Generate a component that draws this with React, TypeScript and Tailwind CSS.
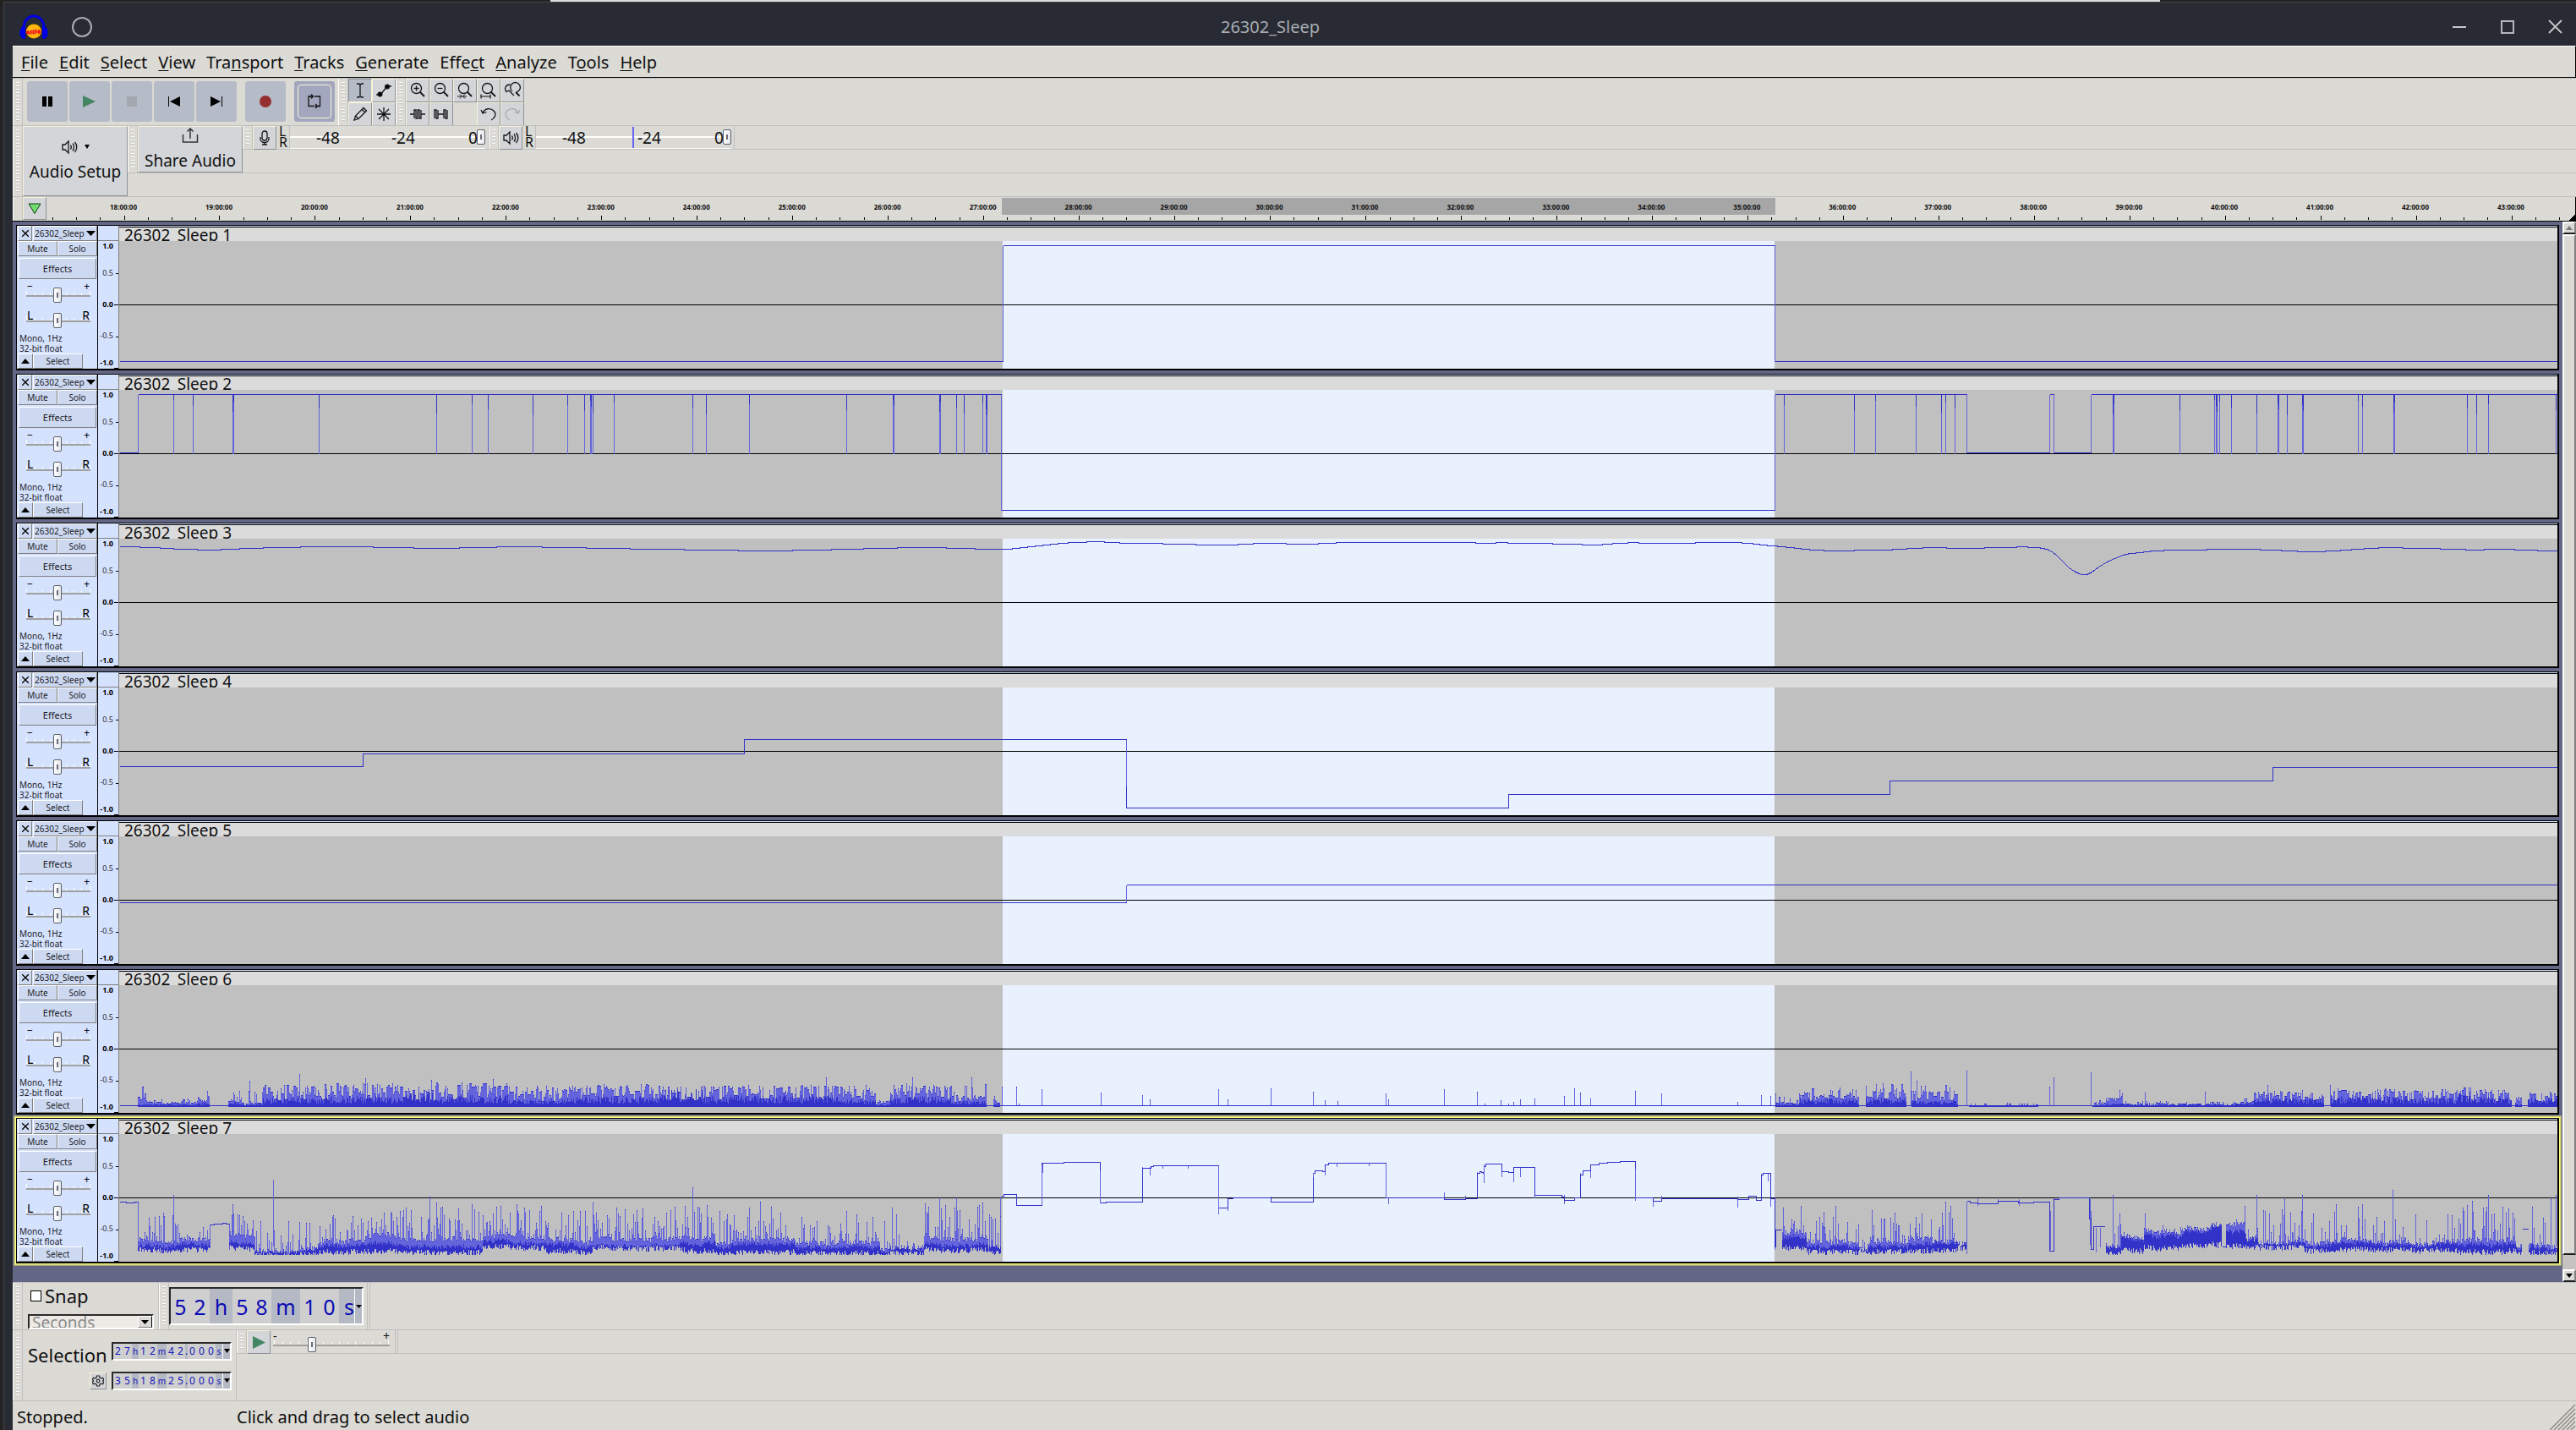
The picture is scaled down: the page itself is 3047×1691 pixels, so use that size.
import React from "react";

const LANE_W = 2884;
const LANE_H = 151;
const DARK = "#3232c8";
const LIGHT = "#6464dc";

/* ---------- waveform data ---------- */

function random(seed: number) {
  let s = seed;
  return () => {
    s = (s * 1664525 + 1013904223) >>> 0;
    return s / 4294967296;
  };
}

type Wave = { dark: string; light: string };

const gates: number[] = [
  64, 87, 134, 135, 236, 375, 417, 436, 489, 530, 550, 557, 558, 560, 585, 678, 694, 745, 860, 915, 916, 970, 971, 990,
  999, 1021, 1025, 1026, 1969, 2052, 2077, 2125, 2155, 2160, 2171, 2358, 2359, 2437, 2478, 2480, 2481, 2484, 2498, 2528,
  2553, 2554, 2564, 2582, 2583, 2648, 2653, 2690, 2691, 2777, 2788, 2802, 2882,
];

const wave1: Wave = { dark: "M0 142H1045M1045 5H1958M1958 142H2884", light: "M1045 142V5M1958 5V142" };

const wave2: Wave = {
  dark:
    "M0 74H22M22 5H1043M1043 142H1958M1958 5H2185M2185 74H2283M2283 5H2288M2288 74H2332M2332 5H2884" +
    gates.map((x, i) => `M${x} 5V${11 + ((i * 7) % 19)}`).join(""),
  light:
    "M22 74V5M1043 5V142M1958 142V5M2185 5V74M2283 74V5M2288 5V74M2332 74V5" + gates.map((x) => `M${x} 5V75`).join(""),
};

function steps(points: [number, number][]) {
  return points.map(([x, y], i) => (i === 0 ? `M${x} ${y}` : `H${x}V${y}`)).join("");
}

const wave3: Wave = {
  dark:
    steps([
      [0, 9], [24, 10], [48, 11], [64, 12], [92, 13], [120, 12], [142, 11], [170, 10], [214, 9], [300, 10], [348, 11],
      [402, 10], [446, 9], [500, 10], [552, 11], [604, 12], [668, 13], [732, 14], [796, 13], [842, 12], [880, 11],
      [920, 10], [978, 11], [1012, 12], [1056, 11], [1065, 10], [1074, 9], [1083, 8], [1092, 7], [1101, 6], [1110, 5],
      [1122, 4], [1144, 3], [1165, 4], [1183, 5], [1234, 6], [1273, 7], [1323, 6], [1341, 5], [1380, 6], [1418, 5],
      [1439, 4], [1604, 5], [1628, 4], [1642, 5], [1695, 6], [1730, 7], [1754, 6], [1766, 5], [1784, 4], [1797, 5],
      [1864, 4], [1919, 5], [1932, 6], [1940, 7], [1949, 8], [1961, 9], [1971, 10], [1981, 11], [1989, 12], [1999, 13],
      [2016, 14], [2052, 13], [2097, 12], [2114, 11], [2133, 10], [2161, 11], [2206, 10], [2244, 9], [2257, 10],
      [2272, 11], [2277, 12], [2281, 13],
    ]) +
    "L2286 15L2292 20L2299 27L2306 34L2312 38L2318 41L2321 42H2327L2333 39L2341 33L2351 27L2360 23L2370 19L2378 17H2385V16H2394V15H2402V14H2418V13H2469V12H2532V13H2557V14H2576V15H2609V14H2627V13H2640V12H2655V11H2672V10H2701V11H2745V12H2775V13H2797V12H2833V13H2860V14H2884",
  light: "",
};

const wave4: Wave = {
  dark: "M0 93H288V78H739V61H1191M1191 116V142H1643V126H2094V110H2547V94H2884",
  light: "M1191 61V142",
};

const wave5: Wave = { dark: "M0 78H1191M1191 57H2884", light: "M1191 78V57" };

/* [start, end, usual peak, highest peak, height of the dense part] */
const motion: [number, number, number, number, number][] = [
  [22, 36, 11, 24, 2], [36, 92, 5, 9, 2], [92, 107, 11, 18, 3], [129, 145, 12, 22, 4], [145, 170, 4, 20, 2],
  [170, 250, 21, 26, 8], [250, 330, 24, 28, 9], [330, 375, 18, 24, 13], [375, 460, 22, 29, 10], [460, 530, 17, 24, 6],
  [530, 640, 21, 26, 9], [640, 690, 19, 24, 16], [690, 850, 22, 26, 10], [850, 895, 20, 25, 7], [895, 912, 5, 8, 2],
  [912, 985, 22, 27, 9], [985, 1026, 12, 26, 5], [1034, 1042, 8, 12, 2],
  [1959, 1987, 4, 12, 2], [1987, 2058, 17, 22, 7], [2066, 2114, 20, 30, 8], [2120, 2175, 17, 26, 5],
  [2188, 2270, 1, 4, 1], [2334, 2350, 4, 7, 1], [2350, 2370, 9, 15, 3], [2370, 2500, 3, 6, 2], [2500, 2525, 6, 9, 3],
  [2525, 2608, 16, 20, 8], [2616, 2766, 17, 21, 9], [2766, 2782, 21, 26, 12], [2782, 2830, 16, 20, 9],
  [2834, 2842, 10, 18, 2], [2849, 2884, 14, 18, 8],
];
const motionSpikes: [number, number][] = [
  [154, 30], [213, 38], [291, 33], [369, 31], [442, 32], [836, 34], [938, 34], [1008, 34], [1044, 23], [1061, 23],
  [1064, 3], [1091, 20], [1161, 16], [1210, 13], [1219, 8], [1300, 20], [1311, 8], [1362, 21], [1412, 17], [1426, 7],
  [1441, 6], [1498, 15], [1501, 8], [1567, 20], [1606, 17], [1615, 3], [1634, 7], [1643, 3], [1649, 5], [1657, 8],
  [1674, 9], [1709, 12], [1721, 21], [1728, 16], [1740, 9], [1793, 18], [1824, 15], [1914, 5], [1942, 13], [1953, 12],
  [1959, 15], [2119, 41], [2126, 30], [2185, 42], [2283, 23], [2288, 34], [2332, 40], [2366, 19], [2396, 16],
  [2467, 17], [2541, 25], [2615, 25],
];

function motionWave(): Wave {
  const r = random(61);
  let dark = "M0 142H2884";
  let light = "";
  for (const [a, b, usual, high, dense] of motion) {
    let hold = usual;
    for (let x = a; x < b; x++) {
      const k = r();
      if (k > 0.85) hold = usual + (high - usual) * r();
      else if (k > 0.3) hold = usual * (0.35 + 0.75 * r());
      const body = Math.min(hold, dense * (0.3 + r()));
      light += `M${x} 142V${Math.round(142 - hold)}`;
      dark += `M${x} 143V${Math.round(142 - body)}M${x} ${Math.round(142 - hold)}v1`;
    }
  }
  for (const [x, h] of motionSpikes) {
    light += `M${x} 142V${142 - h}`;
    dark += `M${x} ${142 - h}v1`;
  }
  return { dark, light };
}

/* [start, end, top of haze, top of dense part, bottom, highest spike, spike chance] */
const light7: [number, number, number, number, number, number, number][] = [
  [22, 107, 122, 131, 137, 92, 0.3], [130, 160, 114, 126, 134, 90, 0.4], [160, 235, 132, 136, 142, 100, 0.3],
  [235, 290, 125, 133, 140, 94, 0.36], [290, 430, 118, 130, 139, 84, 0.42], [430, 505, 117, 127, 134, 82, 0.4],
  [505, 560, 121, 130, 139, 88, 0.4], [560, 665, 118, 129, 134, 86, 0.36], [665, 705, 117, 127, 137, 82, 0.42],
  [705, 800, 123, 131, 141, 84, 0.4], [800, 900, 126, 134, 142, 94, 0.32], [900, 952, 132, 137, 142, 92, 0.26],
  [952, 1028, 118, 128, 136, 82, 0.44], [1028, 1043, 130, 132, 140, 92, 0.25],
  [1967, 1996, 112, 121, 134, 96, 0.3], [1996, 2058, 126, 134, 140, 90, 0.42], [2058, 2068, 133, 134, 137, 120, 0.1],
  [2068, 2116, 125, 133, 140, 90, 0.42], [2116, 2145, 120, 130, 139, 92, 0.44], [2145, 2175, 124, 129, 138, 88, 0.38],
  [2175, 2185, 125, 129, 134, 110, 0.2], [2350, 2368, 128, 132, 140, 104, 0.2],
  [2368, 2395, 117, 122, 137, 112, 0.05], [2395, 2440, 110, 118, 134, 106, 0.05], [2440, 2475, 110, 116, 133, 104, 0.06],
  [2475, 2487, 105, 110, 131, 102, 0.1], [2492, 2515, 104, 116, 133, 98, 0.2], [2515, 2530, 118, 122, 132, 104, 0.2],
  [2530, 2585, 122, 128, 133, 86, 0.4], [2585, 2680, 124, 130, 137, 90, 0.32], [2680, 2765, 126, 131, 138, 93, 0.3],
  [2765, 2835, 123, 131, 140, 82, 0.32], [2835, 2842, 128, 134, 139, 122, 0.1], [2850, 2884, 128, 134, 141, 98, 0.18],
];
const lightSpikes: [number, number][] = [
  [64, 71], [134, 82], [182, 54], [367, 73], [375, 80], [417, 82], [451, 84], [499, 84], [560, 80],
  [657, 85], [678, 62], [684, 85], [758, 79], [860, 90], [914, 86], [953, 81], [970, 74], [990, 74], [1021, 80],
  [1968, 86], [1989, 84], [2030, 84], [2073, 89], [2160, 79], [2166, 84], [2358, 71], [2366, 93], [2396, 93],
  [2514, 84], [2528, 71], [2561, 76], [2582, 71], [2622, 82], [2648, 85], [2653, 82], [2689, 65], [2777, 83],
  [2783, 78], [2802, 71], [2854, 85], [2876, 76], [2882, 71],
];

function lightWave(): Wave {
  const r = random(977);
  let dark =
    "M0 80H8V81H18V80H22M107 107H112V106H122V105H126V106H130" +
    "M1043 73H1046V71H1061V84H1091M1091 36V34H1117V33H1160V43M1160 81H1167V80H1210V40H1220V38H1223V37H1300" +
    "M1300 87H1311V76H1317V75H1362V80H1412V50M1412 46H1414V43H1423V44H1426V36H1430V34H1498M1498 75H1567V77H1592V76H1606V46H1609V44H1611V45H1613V46" +
    "M1614 38H1616V35H1635V44H1643V45H1649V39H1674V72H1706V74H1709V78H1721V75H1728V48H1731V43H1740V36H1750V34H1760V33H1775V32H1793V40" +
    "M1793 75H1814V79H1824V76H1914V77H1927V73H1936V78H1942V48H1944V46H1953V76H1958M1958 74V133H1959V113H1966" +
    "M2185 79H2189V81H2198V82H2222V79H2246V81H2264V80H2283V138H2288V77H2294V75H2330V100H2332V136H2335V109H2348" +
    "M2842 112H2849M2487 133H2491";
  let light =
    "M22 80V132M107 106V134M130 106V136M1042 134V73M1061 71V84M1091 84V34M1092 45V34M1160 34V81M1210 80V38M1219 48V38M1234 37V40M1264 37V40M1300 37V94" +
    "M1311 90V75M1362 73V80M1412 80V45M1426 48V35M1440 34V38M1478 34V37M1498 34V75M1501 75V82M1567 68V77M1592 72V77M1606 76V44M1614 57V35M1635 35V50M1649 56V39M1657 39V50" +
    "M1674 39V75M1709 71V82M1728 75V45M1740 51V35M1793 32V78M1814 74V85M1824 72V79M1914 73V86M1942 78V46M1950 46V55M1953 46V85M1958 76V136" +
    "M2185 141V79M2198 75V84M2222 76V80M2247 76V84M2283 80V138M2284 90V136M2288 138V75M2331 76V130M2332 136V90M2338 110V139M2343 110V133";
  for (const [a, b, haze, dense, bottom, spike, chance] of light7) {
    let drift = 0;
    for (let x = a; x < b; x++) {
      drift = Math.max(-3, Math.min(3, drift + (r() - 0.5) * 2));
      const hit = r() < chance;
      const top = hit ? haze - (haze - spike) * Math.pow(r(), 1.3) : haze + drift + r() * 6;
      const mid = Math.max(top, dense + drift + (r() - 0.5) * 5);
      const low = Math.min(142, bottom + drift * 0.5 + (r() - 0.6) * 7);
      light += `M${x} ${Math.round(low)}V${Math.round(top)}`;
      dark += `M${x} ${Math.round(low)}V${Math.round(Math.min(mid, low - 1))}M${x} ${Math.round(top)}v1`;
    }
  }
  for (const [x, y] of lightSpikes) {
    light += `M${x} 132V${y}`;
    dark += `M${x} ${y}v1`;
  }
  return { dark, light };
}

const tracks: { name: string; wave: Wave; focused?: boolean }[] = [
  { name: "26302_Sleep 1", wave: wave1 },
  { name: "26302_Sleep 2", wave: wave2 },
  { name: "26302_Sleep 3", wave: wave3 },
  { name: "26302_Sleep 4", wave: wave4 },
  { name: "26302_Sleep 5", wave: wave5 },
  { name: "26302_Sleep 6", wave: motionWave() },
  { name: "26302_Sleep 7", wave: lightWave(), focused: true },
];

/* ---------- shared pieces ---------- */

function Grabber() {
  return (
    <div className="flex w-3 shrink-0 flex-col items-center border-l border-r border-l-white border-r-[#bfbfbf] py-1">
      <div className="w-1 flex-1 bg-[repeating-linear-gradient(to_bottom,#ffffff_0px,#ffffff_1px,#c9c8c4_1px,#c9c8c4_2px,transparent_2px,transparent_4px)]" />
    </div>
  );
}

const bevel = "border border-t-[#f7f4d8] border-l-[#f7f4d8] border-b-[#8d9196] border-r-[#8d9196] bg-[#d3d5d8]";

function ToolButton({ label, pressed, children }: { label: string; pressed?: boolean; children: React.ReactNode }) {
  return (
    <button
      aria-label={label}
      className={
        pressed
          ? "flex size-7 items-center justify-center border border-t-[#8d9196] border-l-[#8d9196] border-r-[#f7f4d8] border-b-[#f7f4d8] bg-[#b5bbc7]"
          : "flex size-7 items-center justify-center " + bevel
      }
    >
      {children}
    </button>
  );
}

function Icon({ children, size = 20, stroke = "#141414" }: { children: React.ReactNode; size?: number; stroke?: string }) {
  return (
    <svg width={size} height={size} viewBox={`0 0 ${size} ${size}`} fill="none" stroke={stroke} strokeWidth="1.3">
      {children}
    </svg>
  );
}

function TransportButton({ label, children }: { label: string; children: React.ReactNode }) {
  return (
    <button aria-label={label} className="flex size-12 items-center justify-center rounded-[3px] bg-[#b5bbc7]">
      {children}
    </button>
  );
}

const thumb =
  "appearance-none bg-transparent [&::-webkit-slider-thumb]:h-[18px] [&::-webkit-slider-thumb]:w-[10px] [&::-webkit-slider-thumb]:appearance-none [&::-webkit-slider-thumb]:rounded-[2px] [&::-webkit-slider-thumb]:border [&::-webkit-slider-thumb]:border-[#5c6068] [&::-webkit-slider-thumb]:bg-[linear-gradient(#6b6b78,#6b6b78),linear-gradient(to_right,#ffffff,#e4e7ec)] [&::-webkit-slider-thumb]:bg-[length:2px_6px,100%_100%] [&::-webkit-slider-thumb]:bg-center [&::-webkit-slider-thumb]:bg-no-repeat";

function Slider({
  label,
  value,
  ticks,
  left,
  right,
  kind,
}: {
  label: string;
  value: number;
  ticks: number;
  left: string;
  right: string;
  kind: "gain" | "pan" | "speed";
}) {
  const labels = {
    gain: "absolute inset-x-0 top-0 flex justify-between px-[1px] text-[12px] leading-[14px]",
    pan: "absolute inset-x-0 top-0 flex justify-between px-[1px] text-[14px] leading-[22px]",
    speed: "absolute inset-x-0 top-0 flex justify-between text-[14px] leading-[14px]",
  };
  return (
    <div className="relative h-full w-full">
      <svg className="absolute inset-0 h-full w-full" viewBox="0 0 100 30" preserveAspectRatio="none" shapeRendering="crispEdges">
        {Array.from({ length: ticks }, (_, i) => (
          <path
            key={i}
            d={`M${1 + (i * 98) / (ticks - 1)} ${i === 0 || i === ticks - 1 ? 12 : 14}V18`}
            stroke="#fff"
            strokeWidth="1"
            vectorEffect="non-scaling-stroke"
          />
        ))}
        <rect x="0" y="17" width="100" height="2" fill="#a0a0a0" />
      </svg>
      <div className={labels[kind]}>
        <span>{left}</span>
        <span>{right}</span>
      </div>
      <input type="range" aria-label={label} min={0} max={100} defaultValue={value} className={"absolute inset-x-0 top-[8px] h-[18px] w-full " + thumb} />
    </div>
  );
}

/* ---------- title and menu bars ---------- */

function TitleBar() {
  return (
    <header className="flex h-[51px] items-center bg-[#282b33] pt-[6px] text-[#a9adb3]">
      <div className="flex w-[99px] shrink-0 items-center gap-[28px] pl-[18px]">
        <svg className="shrink-0" width="34" height="30" viewBox="0 0 34 30">
          <path d="M5 17C5 8 10 2 17 2s12 6 12 15" fill="none" stroke="#0000e6" strokeWidth="3" />
          <ellipse cx="17" cy="20" rx="9" ry="8.5" fill="#ffb000" />
          <path d="M8.500 20l2-1 2 1 2-2 2 1 2-2 2 2 2-1 2.500 1v3l-2 1-3-1-2 2-3-1-3 1-3-1-1.500-1z" fill="#f01818" />
          <path d="M12 14v12M15 13v15M18 12.500v15M21 13.500v13" stroke="#ffd94a" strokeWidth=".6" />
          <path d="M5 13c-6 4-6 12-1 16h3V14zM29 13c6 4 6 12 1 16h-3V14z" fill="#0000e6" />
        </svg>
        <span className="size-6 shrink-0 rounded-full border-2 border-[#a9adb3]" />
      </div>
      <h1 className="flex-1 text-center text-[20px] leading-6">26302_Sleep</h1>
      <div className="flex w-[146px] items-center justify-between pr-4">
        <button aria-label="Minimize" className="flex size-4 items-center">
          <span className="h-[2px] w-full bg-[#c3c5c8]" />
        </button>
        <button aria-label="Maximize" className="size-[16px] border-2 border-[#b4b6ba]" />
        <button aria-label="Close">
          <svg width="17" height="17" viewBox="0 0 17 17" stroke="#c3c5c8" strokeWidth="1.8">
            <path d="M1 1l15 15M16 1L1 16" />
          </svg>
        </button>
      </div>
    </header>
  );
}

const menus: [string, string, string][] = [
  ["", "F", "ile"], ["", "E", "dit"], ["", "S", "elect"], ["", "V", "iew"], ["Tra", "n", "sport"], ["", "T", "racks"],
  ["", "G", "enerate"], ["Effe", "c", "t"], ["", "A", "nalyze"], ["T", "o", "ols"], ["", "H", "elp"],
];

function MenuBar() {
  return (
    <nav className="flex h-[38px] items-center border-t border-r border-b border-t-white border-r-black border-b-black pt-[2px] pl-[3px] text-[20px] leading-6">
      {menus.map(([a, b, c]) => (
        <button key={a + b + c} className="pr-[6px] pl-[7px]">
          {a}
          <span className="underline decoration-1 underline-offset-2">{b}</span>
          {c}
        </button>
      ))}
    </nav>
  );
}

/* ---------- toolbars ---------- */

function ZoomGlass({ children }: { children?: React.ReactNode }) {
  return (
    <Icon>
      <circle cx="8.500" cy="7.500" r="6" />
      <path d="M12.500 11.500L18 17" strokeWidth="1.8" />
      {children}
    </Icon>
  );
}

function TransportRow() {
  return (
    <div className="flex h-14 border-t border-[#bfbfbf]">
      <Grabber />
      <div className="flex items-center gap-[2px] pb-[1px] pl-[5px]">
        <TransportButton label="Pause">
          <svg width="14" height="12" viewBox="0 0 14 12"><path d="M1 0h5v12H1zM8 0h5v12H8z" /></svg>
        </TransportButton>
        <TransportButton label="Play">
          <svg width="16" height="14" viewBox="0 0 16 14"><path d="M0 0l15 7L0 14z" fill="#448563" /></svg>
        </TransportButton>
        <TransportButton label="Stop"><span className="size-3 bg-[#a3a7ae]" /></TransportButton>
        <TransportButton label="Skip to start">
          <svg width="16" height="12" viewBox="0 0 16 12"><path d="M1 0h1v12H1zM15 0v12L3 6z" /></svg>
        </TransportButton>
        <TransportButton label="Skip to end">
          <svg width="16" height="12" viewBox="0 0 16 12"><path d="M14 0h1v12h-1zM1 0v12l12-6z" /></svg>
        </TransportButton>
      </div>
      <div className="flex items-center gap-[10px] pr-1 pb-[1px] pl-[10px]">
        <TransportButton label="Record"><span className="size-[14px] rounded-full bg-[#952f2f]" /></TransportButton>
        <button aria-label="Loop" className="flex size-12 items-center justify-center rounded-[3px] bg-[#a3a7be]">
          <span className="flex size-10 items-center justify-center rounded-[4px] border border-[#f7f4d8]">
            <Icon size={18}>
              <path d="M4.500 3H2v11.500h7M9 3h6.500v11.500H13" />
              <path d="M2 3h5M5 .5L7.500 3 5 5.500M15.500 14.500H10M10 12l2.500 2.500L10 17" />
            </Icon>
          </span>
        </button>
      </div>
      <Grabber />
      <div className="grid grid-cols-2">
        <ToolButton label="Selection tool" pressed>
          <Icon><path d="M6 2h2.500L10 3.500 11.500 2H14M6 18h2.500l1.500-1.500 1.500 1.500H14M10 3.500v13" /></Icon>
        </ToolButton>
        <ToolButton label="Envelope tool">
          <Icon>
            <path d="M1 15h5L14 5h5" />
            <circle cx="5.500" cy="14.500" r="2.400" fill="#000" />
            <circle cx="14" cy="5.500" r="2.400" fill="#000" />
          </Icon>
        </ToolButton>
        <ToolButton label="Draw tool">
          <Icon><path d="M3 17l1.500-5L14 2.500 17.500 6 8 15.500zM4.500 12L8 15.500M12.500 4.500L15.500 8" /></Icon>
        </ToolButton>
        <ToolButton label="Multi tool">
          <Icon><path d="M10 2v16M2 10h16M4 4l12 12M16 4L4 16" /></Icon>
        </ToolButton>
      </div>
      <Grabber />
      <div className="grid grid-cols-5">
        <ToolButton label="Zoom in"><ZoomGlass><path d="M5.500 7.500h6M8.500 4.500v6" /></ZoomGlass></ToolButton>
        <ToolButton label="Zoom out"><ZoomGlass><path d="M5.500 7.500h6" /></ZoomGlass></ToolButton>
        <ToolButton label="Fit selection to width"><ZoomGlass><path d="M1 17h5M4 14.500L6.500 17 4 19.500M12 17H7.500M10 14.500L7.500 17l2.500 2.500" strokeWidth="1" /></ZoomGlass></ToolButton>
        <ToolButton label="Fit project to width"><ZoomGlass><path d="M1 14.500v5M12 14.500v5M1 17h11" strokeWidth="1.200" /></ZoomGlass></ToolButton>
        <ToolButton label="Zoom toggle">
          <Icon>
            <path d="M15 12a5.800 5.800 0 1 0-5-1" />
            <path d="M14 12l4.500 4.500" strokeWidth="1.800" />
            <path d="M7.500 3C2 3 0 8 3 11.500l3-1.500 6 6" />
          </Icon>
        </ToolButton>
        <ToolButton label="Trim audio">
          <Icon><path d="M1 10h5M6 15V5h2v10h2V5h2v10h2V5M14 10h5" /></Icon>
        </ToolButton>
        <ToolButton label="Silence audio">
          <Icon><path d="M2 15V5h2v10h2V5M6 10h7M13 15V5h2v10h2V5" /></Icon>
        </ToolButton>
        <span />
        <ToolButton label="Undo">
          <Icon><path d="M3 9C5 3 12 2 16 6s1 9-3 11M1 5l2 4 4.500-1.500" /></Icon>
        </ToolButton>
        <ToolButton label="Redo">
          <Icon stroke="#a9abae"><path d="M17 9C15 3 8 2 4 6s-1 9 3 11M19 5l-2 4-4.500-1.500" /></Icon>
        </ToolButton>
      </div>
    </div>
  );
}

function Speaker() {
  return (
    <Icon>
      <path d="M2 7h3l4-4v14l-4-4H2z" />
      <path d="M11.500 7.500c1 1.500 1 3.500 0 5M14 5.500c2 2.500 2 6.500 0 9M16.500 4c3 3.500 3 8.500 0 12" />
    </Icon>
  );
}

function Meter({ label, icon, cursor }: { label: string; icon: React.ReactNode; cursor?: boolean }) {
  return (
    <div className="flex w-[291px] border-r border-[#bfbfbf]">
      <Grabber />
      <ToolButton label={label + " options"}>{icon}</ToolButton>
      <div className="ml-[3px] flex w-3 flex-col text-[16px] leading-[13px]">
        <span>L</span>
        <span>R</span>
      </div>
      <div className="relative h-[27px] w-[232px] border-b border-l border-b-white border-l-[#bfbfbf]">
        <div className="mt-[12px] h-[2px] w-full bg-white" />
        {cursor && <span className="absolute top-[1px] left-[114px] h-[25px] w-[2px] bg-[#6464f0]" />}
        <div className="absolute inset-0 flex items-center pt-[1px] text-[19px] leading-6">
          <span className="ml-[31px] w-[89px]">-48</span>
          <span className="w-[91px]">-24</span>
          <span>0</span>
        </div>
        <input type="range" aria-label={label + " level"} defaultValue={100} className={"absolute top-[4px] left-0 h-[18px] w-[231px] " + thumb} />
      </div>
    </div>
  );
}

function AudioRow() {
  return (
    <div className="flex h-[84px] border-t border-[#bfbfbf]">
      <Grabber />
      <button className={"flex w-[124px] flex-col items-center justify-center pb-[3px] text-[19px] leading-6 " + bevel}>
        <span className="mb-[7px] flex items-center gap-2">
          <Speaker />
          <svg width="6" height="5" viewBox="0 0 6 5"><path d="M0 0h6L3 5z" /></svg>
        </span>
        Audio Setup
      </button>
      <div className="flex flex-1 flex-col">
        <div className="flex h-14 border-b border-[#bfbfbf]">
          <Grabber />
          <button className={"flex w-[124px] flex-col items-center text-[19px] leading-6 " + bevel}>
            <svg width="20" height="20" viewBox="0 0 20 20" fill="none" stroke="#333" strokeWidth="1.500" className="mb-[8px]">
              <path d="M1.500 9v9h17V9M10 14V2M6.500 5.500L10 2l3.500 3.500" />
            </svg>
            Share Audio
          </button>
          <div className="flex h-7 flex-1 border-b border-[#bfbfbf]">
            <Meter
              label="Recording"
              icon={
                <Icon>
                  <rect x="7" y="2" width="6" height="11" rx="3" />
                  <path d="M5 9v2c0 6 10 6 10 0V9M10 15v3M7 18h6" />
                </Icon>
              }
            />
            <Meter label="Playback" cursor icon={<Speaker />} />
          </div>
        </div>
      </div>
    </div>
  );
}

/* ---------- timeline ---------- */

const RULER_W = 2990;
const HOUR = 112.92;
const FIRST = 92;

function Timeline() {
  return (
    <div className="flex h-[30px] border-t border-b border-t-[#bfbfbf] border-b-black">
      <div className="w-3 border-r border-l border-r-[#bfbfbf] border-l-white" />
      <button aria-label="Pinned play head" className={"mb-[1px] flex w-7 items-center justify-center " + bevel}>
        <svg width="16" height="14" viewBox="0 0 16 14"><path d="M1 1h14L8 12.500z" fill="#6fdc6f" stroke="#143c14" /></svg>
      </button>
      <div className="relative flex-1 overflow-hidden border-r border-black">
        <svg className="absolute inset-0 h-full w-full" viewBox={`0 0 ${RULER_W} 28`} preserveAspectRatio="none" shapeRendering="crispEdges">
          <rect x="1130" y="1" width="914" height="20" fill="#a6a6a6" />
          {Array.from({ length: 106 }, (_, i) => {
            const x = Math.floor(FIRST + ((i - 3) * HOUR) / 4);
            return <rect key={i} x={x} y={(i - 3) % 4 === 0 ? 22 : 24} width="1" height={(i - 3) % 4 === 0 ? 5 : 3} />;
          })}
          <path d={`M${RULER_W} 21V28H${RULER_W - 7}z`} />
        </svg>
        {Array.from({ length: 26 }, (_, i) => (
          <span
            key={i}
            className="absolute top-[6px] -translate-x-1/2 text-[8px] leading-[12px] font-bold"
            style={{ left: `${((FIRST - 1 + i * HOUR) / RULER_W) * 100}%` }}
          >
            {18 + i}:00:00
          </span>
        ))}
      </div>
    </div>
  );
}

/* ---------- tracks ---------- */

const chip = "border border-t-white border-l-white border-b-[#808080] border-r-[#808080] bg-[#cdd9f1]";

function TrackPanel({ name }: { name: string }) {
  return (
    <div className="flex w-24 flex-col border-r border-black bg-[#d5e2fe] pl-[1px] text-[11px] leading-[12px] text-[#1c1c28]">
      <div className="flex h-[18px]">
        <button aria-label={"Close " + name} className={"flex w-[17px] items-center justify-center " + chip}>
          <svg width="8" height="8" viewBox="0 0 8 8" stroke="#000" strokeWidth="1.300"><path d="M0 0l8 8M8 0L0 8" /></svg>
        </button>
        <button className={"ml-[1px] flex flex-1 items-center justify-between pr-[1px] pl-[1px] text-[10px] " + chip}>
          26302_Sleep
          <svg width="11" height="6" viewBox="0 0 11 6"><path d="M0 0h11L5.500 6z" /></svg>
        </button>
      </div>
      <div className="grid h-[18px] grid-cols-2 text-[10px]">
        <button className={chip}>Mute</button>
        <button className={chip}>Solo</button>
      </div>
      <button className={"mx-[1px] mt-[2px] h-[25px] " + chip}>Effects</button>
      <div className="mt-[2px] mr-2 ml-[10px] h-[30px] text-black">
        <Slider kind="gain" label={name + " gain"} value={49} ticks={9} left="−" right="+" />
      </div>
      <div className="mr-2 ml-[10px] h-[30px] text-black">
        <Slider kind="pan" label={name + " pan"} value={49} ticks={9} left="L" right="R" />
      </div>
      <p className="mt-[2px] px-[2px] text-[10px]">
        Mono, 1Hz
        <br />
        32-bit float
      </p>
      <div className="mt-auto flex h-[18px] text-[10px]">
        <button aria-label={"Collapse " + name} className={"flex w-[18px] items-center justify-center " + chip}>
          <svg width="10" height="6" viewBox="0 0 10 6"><path d="M0 6h10L5 0z" /></svg>
        </button>
        <button className={"w-[59px] " + chip}>Select</button>
      </div>
    </div>
  );
}

function ScaleRuler() {
  return (
    <div className="flex w-[25px] flex-col border-r border-[#808080] bg-[#d5e2fe] text-[9px] leading-[12px]">
      <div className="h-[18px] border-b border-[#808080]" />
      <div className="relative flex flex-1 flex-col items-end pr-[6px] text-[#2c2c34]">
        <span className="font-bold text-black">1.0</span>
        <span className="mt-[20px]">0.5</span>
        <span className="mt-[25px] font-bold text-black">0.0</span>
        <span className="mt-[25px]">-0.5</span>
        <span className="mt-[20px] font-bold text-black">-1.0</span>
        <svg className="absolute inset-0 h-full w-full" viewBox="0 0 24 151" shapeRendering="crispEdges">
          <path d="M21 38.500h3M19 75.500h5M21 113.500h3M19 150.500h5" stroke="#000" />
        </svg>
      </div>
    </div>
  );
}

function Track({ name, wave, focused }: { name: string; wave: Wave; focused?: boolean }) {
  return (
    <section
      className={
        focused
          ? "flex h-[172px] border-t border-r-2 border-b-2 border-l border-black shadow-[0_0_0_1px_#ffff80,0_0_0_2px_#d2d27c,0_0_0_3px_#a5a57a]"
          : "flex h-[172px] border-t border-r-2 border-b-2 border-l border-black"
      }
    >
      <TrackPanel name={name} />
      <ScaleRuler />
      <div className="flex min-w-0 flex-1 flex-col border-t border-[#d5e2fe]">
        <h2 className="h-[17px] overflow-hidden border-t border-black bg-[#dbdbdb] pl-[6px] text-[19px] leading-[19px]">{name}</h2>
        <svg
          role="img"
          aria-label={name + " waveform"}
          className="min-h-0 w-full flex-1 bg-[#c0c0c0]"
          viewBox={`0 0 ${LANE_W} ${LANE_H}`}
          preserveAspectRatio="none"
          shapeRendering="crispEdges"
          fill="none"
        >
          <rect x="1045" y="0" width="913" height={LANE_H} fill="#e9f1ff" />
          <rect x="0" y="75" width={LANE_W} height="1" fill="#000" />
          <g transform="translate(0.5 0.5)">
            <path d={wave.light} stroke={LIGHT} />
            <path d={wave.dark} stroke={DARK} />
          </g>
        </svg>
      </div>
    </section>
  );
}

function ScrollBar() {
  const box = "border-2 border-t-white border-l-white border-b-[#1e1e1e] border-r-[#808080] bg-[#dbdad5]";
  return (
    <div className="flex w-4 flex-col bg-[#c4c3bf]">
      <button aria-label="Scroll up" className={"flex h-[15px] items-center justify-center " + box}>
        <svg width="8" height="5" viewBox="0 0 8 5"><path d="M0 5h8L4 0z" fill="#7a7a7a" /></svg>
      </button>
      <div className={"flex-1 " + box} />
      <div className="h-[17px]" />
      <button aria-label="Scroll down" className={"flex h-[15px] items-center justify-center " + box}>
        <svg width="8" height="5" viewBox="0 0 8 5"><path d="M0 0h8L4 5z" /></svg>
      </button>
    </div>
  );
}

/* ---------- bottom bars ---------- */

const sunken = "border-2 border-t-[#2a2a2a] border-l-[#2a2a2a] border-r-white border-b-white";

function SmallTime({ label, parts }: { label: string; parts: [string, string][] }) {
  return (
    <div role="group" aria-label={label} className={"flex h-[22px] w-[142px] bg-[#b4b9c4] text-[12px] leading-[18px] text-[#1414b8] " + sunken}>
      {parts.map(([digits, unit], i) => (
        <React.Fragment key={i}>
          <span className="flex bg-[#cfcfcf]">
            {digits.split("").map((d, j) => (
              <span key={j} className="w-[11px] text-center">{d}</span>
            ))}
          </span>
          <span className={unit === "." ? "w-[3px]" : unit === "m" ? "w-[11px] text-center text-[10px]" : "w-[8px] text-center text-[10px]"}>{unit}</span>
        </React.Fragment>
      ))}
      <button aria-label={label + " format"} className="ml-auto flex flex-1 items-center justify-center border-l border-white">
        <svg width="7" height="5" viewBox="0 0 7 5"><path d="M0 0h7L3.500 5z" /></svg>
      </button>
    </div>
  );
}

function BigTime() {
  const cell = "w-[23px] bg-[#cfcfcf] text-center";
  return (
    <div role="group" aria-label="Audio position" className={"flex h-[45px] w-[230px] bg-[#b4b9c4] text-[25px] leading-[42px] text-[#0a0ab4] " + sunken}>
      <span className={cell}>5</span>
      <span className={cell}>2</span>
      <span className="w-[27px] text-center">h</span>
      <span className={cell}>5</span>
      <span className={cell}>8</span>
      <span className="w-[34px] text-center">m</span>
      <span className={cell}>1</span>
      <span className={cell}>0</span>
      <span className="w-[18px] text-right">s</span>
      <button aria-label="Audio position format" className="flex flex-1 items-center justify-center border-l border-white">
        <svg width="7" height="4" viewBox="0 0 7 4"><path d="M0 0h7L3.500 4z" /></svg>
      </button>
    </div>
  );
}

function BottomBars() {
  return (
    <footer className="text-[22px] leading-6">
      <div className="flex h-14 border-t border-[#bfbfbf]">
        <Grabber />
        <div className="flex w-[160px] flex-col justify-between pl-[6px]">
          <label className="flex items-center gap-1 pt-[3px] pl-[3px]">
            <input type="checkbox" className="size-[13px] appearance-none border border-black bg-white" />
            Snap
          </label>
          <div className={"flex h-[18px] w-[149px] overflow-hidden bg-[#edeae6] " + sunken}>
            <select aria-label="Snap to" disabled className="h-[16px] flex-1 appearance-none pl-[3px] text-[19px] leading-[16px] text-[#8a8a8a]">
              <option>Seconds</option>
            </select>
            <span className="flex w-[17px] items-center justify-center border border-t-white border-l-white border-r-black border-b-[#808080] bg-[#dbdad5]">
              <svg width="9" height="5" viewBox="0 0 9 5"><path d="M0 0h9L4.500 5z" /></svg>
            </span>
          </div>
        </div>
        <div className="flex border-l border-[#bfbfbf]">
          <Grabber />
        </div>
        <div className="flex items-center border-r border-[#bfbfbf] pr-[4px]">
          <BigTime />
        </div>
        <div className="w-[3px] border-r border-[#bfbfbf]" />
      </div>
      <div className="flex h-[84px] border-t border-[#bfbfbf]">
        <Grabber />
        <div className="grid w-[252px] grid-cols-[99px_142px] content-center items-center gap-y-2 pb-1 pl-[6px]">
          <span className="pt-2">Selection</span>
          <SmallTime label="Selection start" parts={[["27", "h"], ["12", "m"], ["42", "."], ["000", "s"]]} />
          <button aria-label="Selection settings" className={"mr-[6px] flex size-5 items-center justify-center justify-self-end " + bevel}>
            <svg width="14" height="14" viewBox="0 0 14 14" fill="none" stroke="#222" strokeWidth="1.200">
              <path d="M5.500 1h3l.5 2 2 .8 1.700-.6 1 2.400L12.500 7l1.200 1.400-1 2.400-1.700-.6-2 .8-.5 2h-3L5 11l-2-.8-1.700.6L.5 8.400 1.500 7 .5 5.600l.8-2.400 1.700.6L5 3z" />
              <circle cx="7" cy="7" r="1.800" />
            </svg>
          </button>
          <SmallTime label="Selection end" parts={[["35", "h"], ["18", "m"], ["25", "."], ["000", "s"]]} />
        </div>
        <div className="flex-1 border-l border-[#bfbfbf]">
          <div className="flex h-7 border-b border-[#bfbfbf]">
            <Grabber />
            <ToolButton label="Play at speed">
              <svg width="15" height="15" viewBox="0 0 15 15"><path d="M0 0l15 7.500L0 15z" fill="#448563" /></svg>
            </ToolButton>
            <div className="ml-[3px] h-[30px] w-[138px]">
              <Slider kind="speed" label="Playback speed" value={32} ticks={15} left="-" right="+" />
            </div>
            <div className="ml-[6px] w-[4px] border-r border-l border-[#bfbfbf]" />
          </div>
        </div>
      </div>
      <div className="flex h-[35px] items-center border-t border-[#bfbfbf] pt-[3px] pl-[5px] text-[20px]">
        <span className="w-[260px]">Stopped.</span>
        <span className="flex-1">Click and drag to select audio</span>
        <svg className="self-end" width="32" height="31" viewBox="0 1 32 31" stroke="#8f8e8a" strokeWidth="1.500">
          <path d="M1 32L31 2M6 32L31 7M11 32l20-20M16 32l15-15M21 32l10-10M26 32l5-5" />
        </svg>
      </div>
    </footer>
  );
}

export default function App() {
  return (
    <div className="flex min-h-screen flex-col bg-[#232323] font-['Noto_Sans',sans-serif] text-[#101010]">
      <div className="flex h-[2px]">
        <div className="w-[651px]" />
        <div className="w-[1904px] bg-[#dcdcdc]" />
      </div>
      <div className="ml-1 flex flex-1 flex-col border-t border-l border-[#444444] bg-[#282b33]">
        <TitleBar />
        <main className="ml-[10px] flex flex-1 flex-col bg-[#dbdad5]">
          <MenuBar />
          <TransportRow />
          <AudioRow />
          <Timeline />
          <div className="flex flex-1 bg-[#636684]">
            <div className="flex min-w-0 flex-1 flex-col gap-1 px-1 pt-1">
              {tracks.map((t) => (
                <Track key={t.name} {...t} />
              ))}
            </div>
            <ScrollBar />
          </div>
          <BottomBars />
        </main>
      </div>
    </div>
  );
}
